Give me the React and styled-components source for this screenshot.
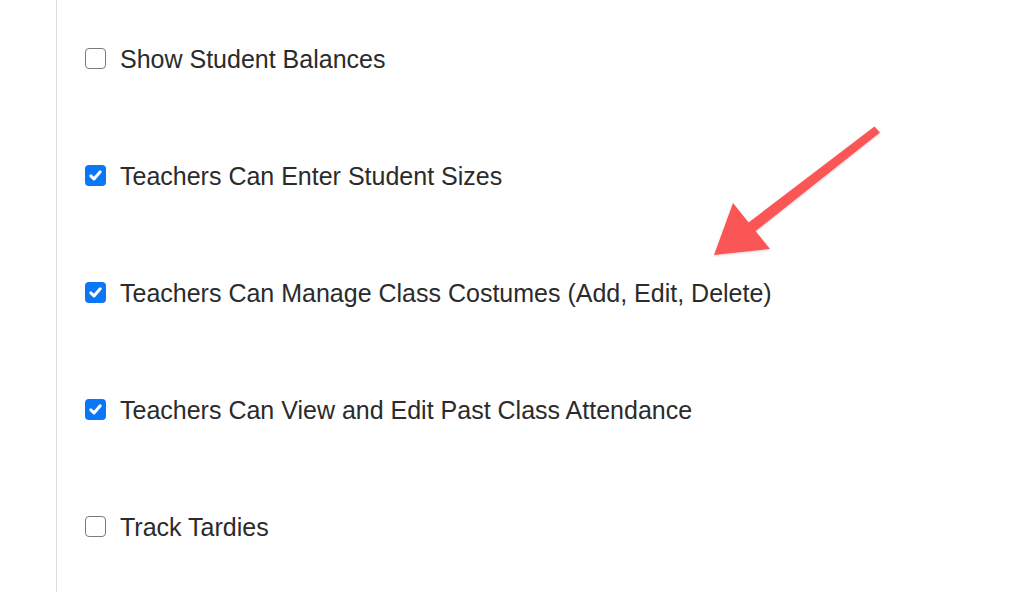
import React from "react";
import styled, { createGlobalStyle } from "styled-components";

const GlobalStyle = createGlobalStyle`
  html, body {
    margin: 0;
    padding: 0;
    background: #fff;
  }
  body {
    font-family: "Liberation Sans", Arial, sans-serif;
  }
`;

const settings = [
  { label: "Show Student Balances", checked: false },
  { label: "Teachers Can Enter Student Sizes", checked: true },
  { label: "Teachers Can Manage Class Costumes (Add, Edit, Delete)", checked: true },
  { label: "Teachers Can View and Edit Past Class Attendance", checked: true },
  { label: "Track Tardies", checked: false },
];

const App = () => {
  return (
    <Page>
      <GlobalStyle />
      <Panel>
        <List>
          {settings.map((s) => (
            <Row key={s.label}>
              <Box checked={s.checked}>
                {s.checked && (
                  <svg width="15" height="15" viewBox="0 0 14 14">
                    <path
                      d="M2.6 7.3 L5.6 10.2 L11.4 3.6"
                      fill="none"
                      stroke="#fff"
                      strokeWidth="2.8"
                      strokeLinecap="round"
                      strokeLinejoin="round"
                    />
                  </svg>
                )}
              </Box>
              <Label>{s.label}</Label>
            </Row>
          ))}
        </List>
      </Panel>
      <Arrow width="1016" height="592" viewBox="0 0 1016 592">
        <defs>
          <filter id="sh" x="-20%" y="-20%" width="140%" height="140%">
            <feDropShadow dx="0" dy="1" stdDeviation="1" floodColor="#000" floodOpacity="0.18" />
          </filter>
        </defs>
        <g filter="url(#sh)" fill="#fb5757">
          <path
            d="M874.5 126.5 L880 132.5 L752 234 L744 226 Z"
            strokeLinejoin="round"
          />
          <polygon points="733,203 714,255 770,249" />
        </g>
      </Arrow>
    </Page>
  );
};

const Page = styled.div`
  position: relative;
  width: 1016px;
  height: 592px;
  overflow: hidden;
`;

const Panel = styled.div`
  margin-left: 56px;
  height: 100%;
  border-left: 1px solid #dedede;
`;

const List = styled.div`
  display: flex;
  flex-direction: column;
  padding-left: 28px;
`;

const Row = styled.div`
  display: flex;
  align-items: center;
  height: 117px;
  gap: 14px;
`;

const Box = styled.span`
  display: flex;
  align-items: center;
  justify-content: center;
  box-sizing: border-box;
  width: 21px;
  height: 21px;
  border-radius: 4px;
  background: ${(p) => (p.checked ? "#0b77f6" : "#fff")};
  border: ${(p) => (p.checked ? "none" : "1.5px solid #7b7b7b")};
`;

const Label = styled.span`
  font-size: 25px;
  color: #2b2b2b;
  position: relative;
  top: 1px;
`;

const Arrow = styled.svg`
  position: absolute;
  left: 0;
  top: 0;
  pointer-events: none;
`;

export default App;
